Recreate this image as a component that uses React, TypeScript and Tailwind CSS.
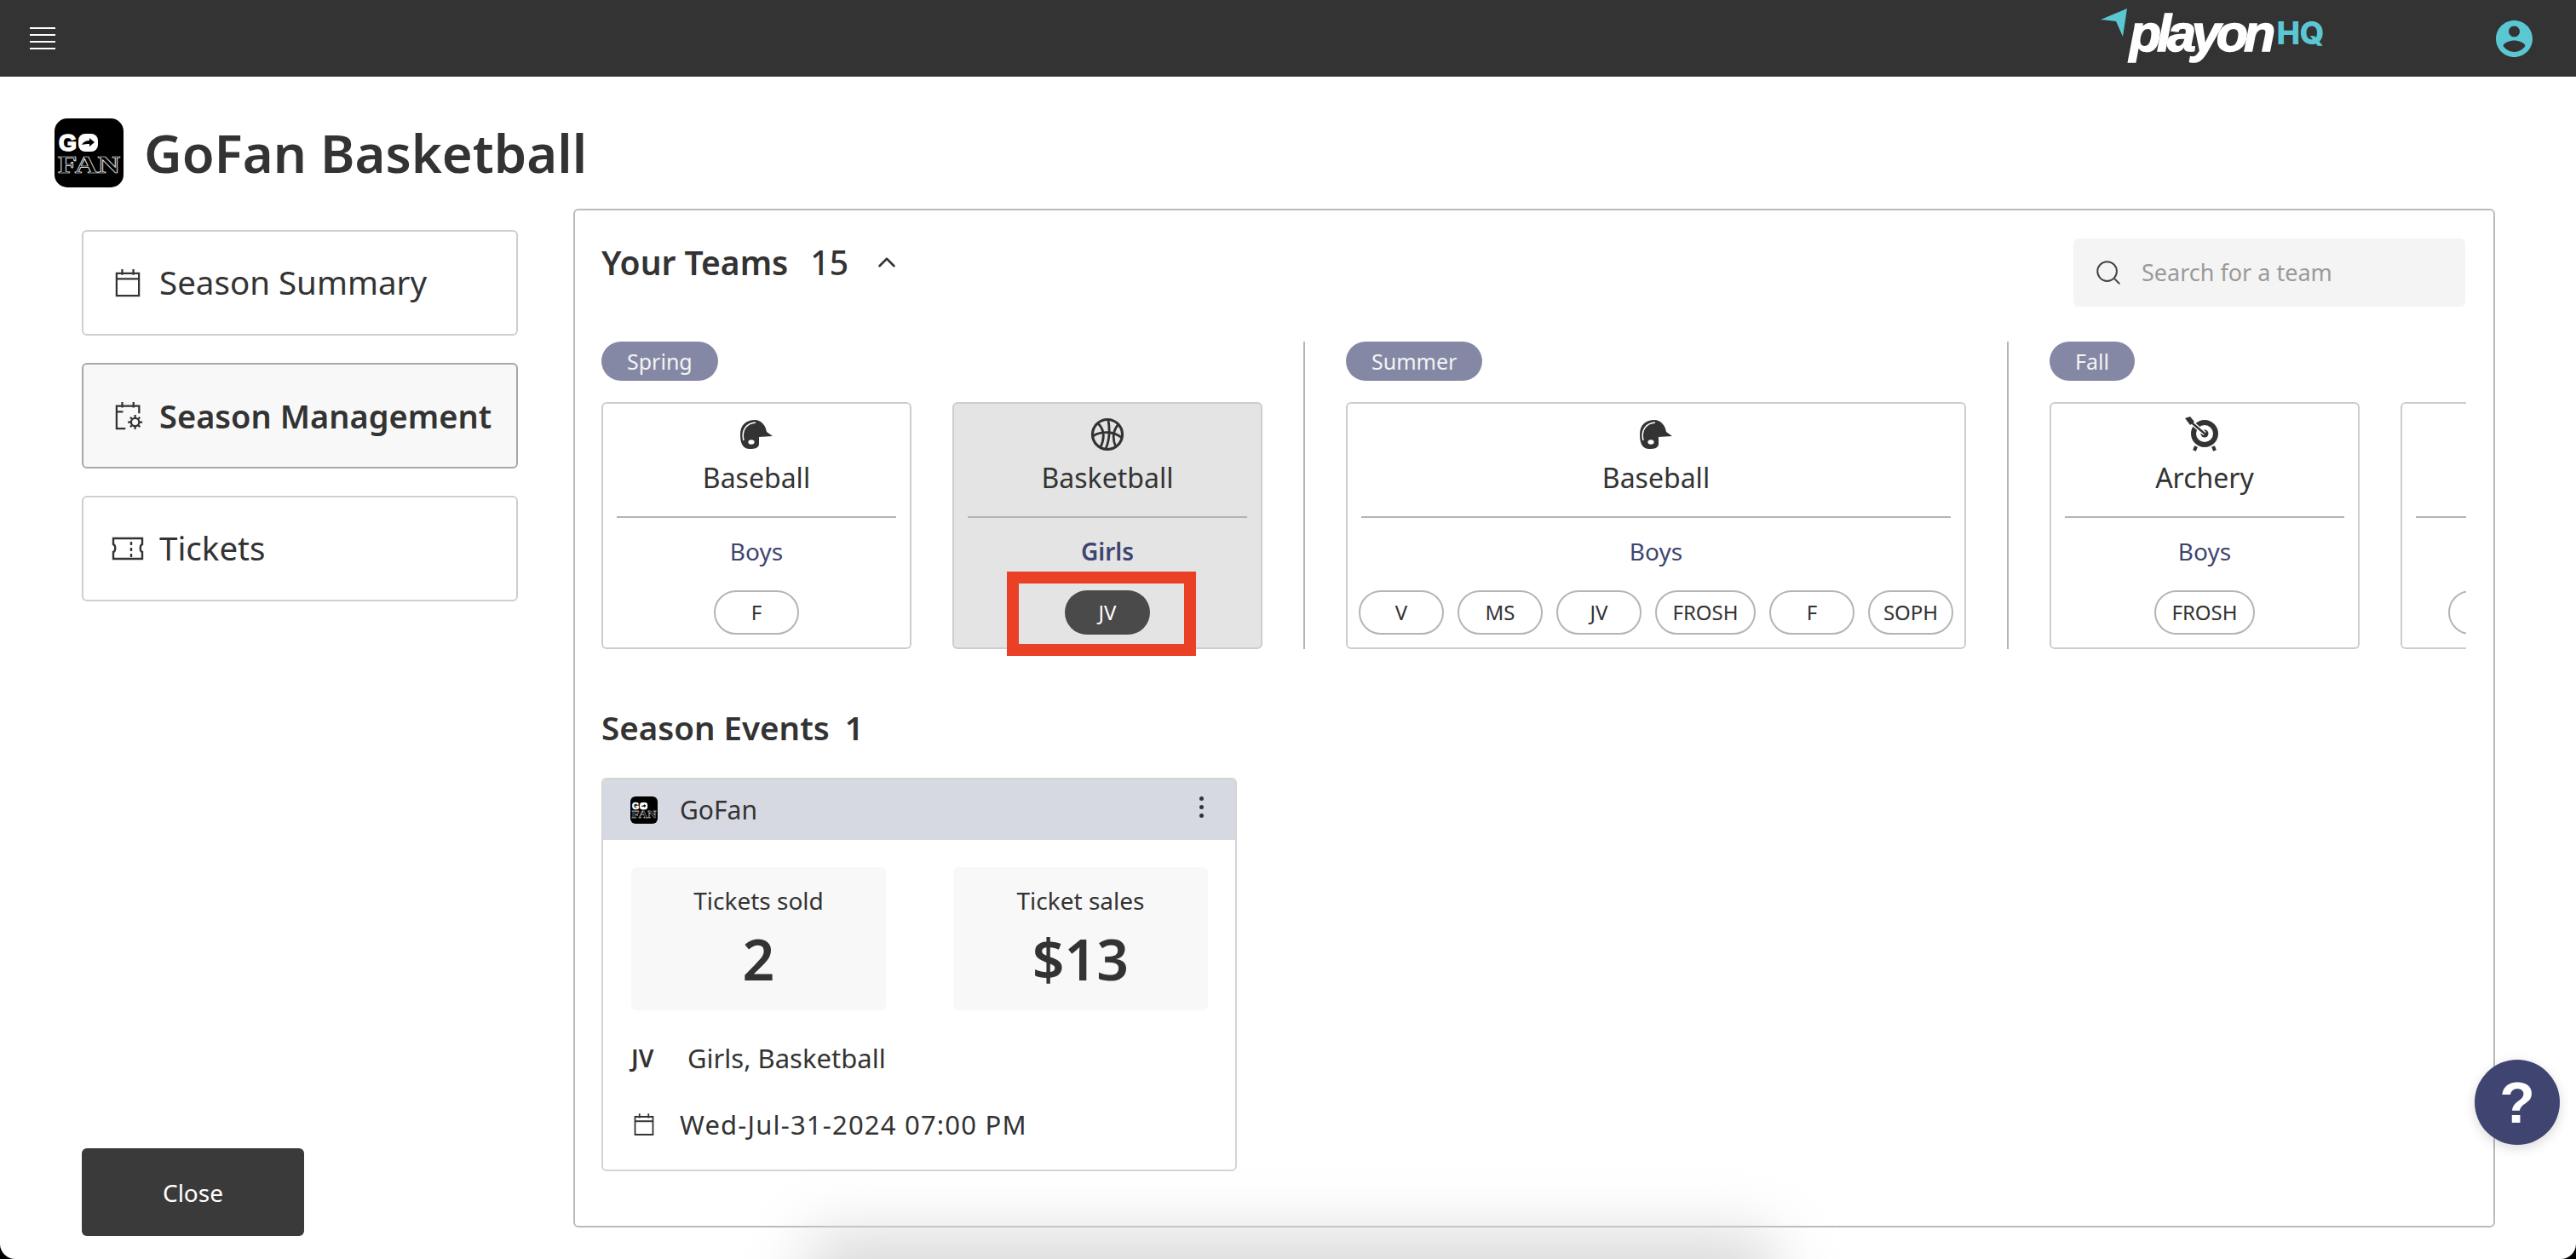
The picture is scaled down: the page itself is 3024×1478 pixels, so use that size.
import React from "react";
import { ChevronUp, Search } from "lucide-react";

type Team = {
  sport: string;
  icon: "helmet" | "ball" | "target";
  gender: string;
  chips: string[];
  wide?: boolean;
  active?: boolean;
};

const seasons: { name: string; teams: Team[] }[] = [
  {
    name: "Spring",
    teams: [
      { sport: "Baseball", icon: "helmet", gender: "Boys", chips: ["F"] },
      { sport: "Basketball", icon: "ball", gender: "Girls", chips: ["JV"], active: true },
    ],
  },
  {
    name: "Summer",
    teams: [
      { sport: "Baseball", icon: "helmet", gender: "Boys", chips: ["V", "MS", "JV", "FROSH", "F", "SOPH"], wide: true },
    ],
  },
  {
    name: "Fall",
    teams: [
      { sport: "Archery", icon: "target", gender: "Boys", chips: ["FROSH"] },
      // scrolled out of the panel, only its left edge shows
      { sport: "", icon: "target", gender: "", chips: ["", " "] },
    ],
  },
];

function HelmetIcon() {
  return (
    <svg viewBox="8 0 60 60" className="w-[60px] h-[60px]">
      <path d="M19 30C19 18 27 13 36 13C44 13 49 20 50 27L57 32L41 33L41 41C41 46 36 47 30 47C23 47 19 42 19 30Z" fill="#333" />
      <path d="M23 37C20 25 26 17 37 16" fill="none" stroke="#fff" strokeWidth="1.6" />
      <ellipse cx="32" cy="39" rx="3.6" ry="2.8" fill="#fff" />
    </svg>
  );
}

function BallIcon() {
  return (
    <svg viewBox="0 0 60 60" fill="none" stroke="#333" strokeWidth="2.8" className="w-[60px] h-[60px]">
      <circle cx="30" cy="30" r="17.5" strokeWidth="3.2" />
      <path d="M31 13C33 25 32 38 28 47M19 17C26 24 27 34 22 45M43 18C36 26 36 36 40 45M13 32C22 26 38 26 47 34" />
    </svg>
  );
}

function TargetIcon() {
  return (
    <svg viewBox="3 0 60 60" className="w-[60px] h-[60px]">
      <circle cx="33" cy="29" r="13" fill="none" stroke="#333" strokeWidth="6" />
      <circle cx="33" cy="29" r="4.5" fill="#333" />
      <path d="M14 13L33 29" stroke="#fff" strokeWidth="5" />
      <path d="M14 13L33 29" stroke="#333" strokeWidth="2.4" />
      <path d="M10 11L16 9L21 15L16 19Z" fill="#333" />
      <path d="M23 44L21 49M43 44L45 49" stroke="#333" strokeWidth="4" />
    </svg>
  );
}

function SportIcon({ kind }: { kind: Team["icon"] }) {
  if (kind === "helmet") return <HelmetIcon />;
  if (kind === "target") return <TargetIcon />;
  return <BallIcon />;
}

function GoFanLogo({ className }: { className: string }) {
  return (
    <svg viewBox="0 0 81 81" className={className}>
      <rect width="81" height="81" rx="15" fill="#000" />
      <text x="5" y="38" fontFamily="Liberation Sans" fontWeight="700" fontSize="27" stroke="#fff" strokeWidth="1.6" fill="#fff">G</text>
      <rect x="28" y="18" width="23" height="21" rx="8" fill="#fff" />
      <path d="M32 31C34 27 38 26 41 26V23L47 28L41 33V30C38 30 35 30 32 31Z" fill="#000" />
      <text x="4" y="64" fontFamily="Liberation Serif" fontWeight="700" fontSize="29" textLength="73" lengthAdjust="spacingAndGlyphs" fill="#000" stroke="#fff" strokeWidth="0.7">FAN</text>
    </svg>
  );
}

function PlayonLogo() {
  return (
    <div className="flex items-center mb-[12px]">
      <svg viewBox="0 0 32 34" className="w-[32px] h-[34px] mb-[24px]">
        <path d="M0 13L31 0L26 33L18 15Z" fill="#5bc7d3" />
      </svg>
      <span className="ml-[2px] pr-[4px] font-['Liberation_Sans',sans-serif] font-bold italic text-[61px] leading-[62px] tracking-[-5px] text-white [-webkit-text-stroke:1.5px_white]">playon</span>
      <span className="ml-[2px] font-['Inter',sans-serif] font-extrabold text-[37px] leading-[38px] tracking-[-0.5px] text-[#5bc7d3]">HQ</span>
    </div>
  );
}

function CalendarIcon({ className }: { className: string }) {
  return (
    <svg viewBox="0 0 32 36" fill="none" stroke="#333" strokeWidth="2.4" className={className}>
      <path d="M2 6H30V34H2ZM2 13H30M9 1V8M23 1V8" />
    </svg>
  );
}

function NavItem({ label, icon, active }: { label: string; icon: React.ReactNode; active?: boolean }) {
  return (
    <div className={active ? "flex items-center h-[124px] pl-[37px] rounded-[6px] border-2 border-[#a8a8a8] bg-[#f8f8f8]" : "flex items-center h-[124px] pl-[37px] rounded-[6px] border-2 border-[#cfcfcf]"}>
      <div className="w-[52px] flex justify-start">{icon}</div>
      <span className={active ? "text-[38px] font-semibold text-[#333]" : "text-[38.5px] text-[#333]"}>{label}</span>
    </div>
  );
}

function TeamCard({ team }: { team: Team }) {
  return (
    <div className={`flex flex-col items-center shrink-0 h-[290px] rounded-[6px] border-2 border-[#cdcdcd] ${team.wide ? "w-[728px]" : "w-[364px]"} ${team.active ? "bg-[#e4e4e4]" : "bg-white"}`}>
      <div className="flex items-center justify-center h-[60px] mt-[6px]">
        <SportIcon kind={team.icon} />
      </div>
      <div className="h-[44px] text-[32px] leading-[44px] text-[#333] mt-[-1px]">{team.sport}</div>
      <div className="self-stretch h-[2px] mx-[16px] mt-[23px] bg-[#b4b4b4]" />
      <div className={team.active ? "h-[44px] mt-[17px] text-[28px] leading-[44px] font-semibold text-[#3f4570]" : "h-[44px] mt-[17px] text-[28px] leading-[44px] text-[#3f4570]"}>{team.gender}</div>
      <div className="flex gap-[16px] mt-[24px]">
        {team.chips.map((chip, i) => (
          <div
            key={i}
            className={`flex items-center justify-center h-[52px] rounded-[26px] text-[24px] ${chip === "FROSH" || chip.trim() === "" ? "w-[118px]" : "w-[100px]"} ${team.active ? "bg-[#4a4a4a] text-white" : "border-2 border-[#b5b5b5] text-[#333]"}`}
          >
            {chip}
          </div>
        ))}
      </div>
    </div>
  );
}

function Stat({ label, value }: { label: string; value: string }) {
  return (
    <div className="flex flex-col items-center w-[299px] h-[168px] pt-[20px] rounded-[6px] bg-[#f8f8f8]">
      <div className="text-[28px] leading-[38px] text-[#333]">{label}</div>
      <div className="mt-[7px] text-[66px] leading-[84px] font-semibold text-[#333]">{value}</div>
    </div>
  );
}

export default function App() {
  return (
    <div className="relative w-[3024px] h-[1478px] overflow-hidden bg-black font-['Noto_Sans',sans-serif]">
      <div className="h-full rounded-b-[18px] bg-white overflow-hidden">
        {/* Top bar */}
        <header className="flex items-center justify-between h-[90px] pl-[35px] pr-[51px] bg-[#333]">
          <div className="flex flex-col gap-[6px] w-[30px]">
            <div className="h-[2px] bg-white" />
            <div className="h-[2px] bg-white" />
            <div className="h-[2px] bg-white" />
            <div className="h-[2px] bg-white" />
          </div>
          <div className="flex items-center gap-[202px]">
            <PlayonLogo />
            <svg viewBox="2 2 20 20" className="w-[43px] h-[43px]" fill="#5bc7d3">
              <path d="M12 2C6.48 2 2 6.48 2 12s4.48 10 10 10 10-4.48 10-10S17.52 2 12 2zm0 3c1.66 0 3 1.34 3 3s-1.34 3-3 3-3-1.34-3-3 1.34-3 3-3zm0 14.2c-2.5 0-4.71-1.28-6-3.22.03-1.99 4-3.08 6-3.08 1.99 0 5.97 1.09 6 3.08-1.29 1.94-3.5 3.22-6 3.22z" />
            </svg>
          </div>
        </header>

        {/* Page title */}
        <div className="flex items-center gap-[24px] pl-[64px] mt-[49px]">
          <GoFanLogo className="w-[81px] h-[81px]" />
          <h1 className="text-[61.5px] leading-[81px] font-semibold text-[#333]">GoFan Basketball</h1>
        </div>

        <div className="flex mt-[25px] pl-[96px]">
          {/* Side menu */}
          <aside className="flex flex-col w-[512px] mr-[65px] pt-[25px]">
            <div className="flex flex-col gap-[32px]">
              <NavItem label="Season Summary" icon={<CalendarIcon className="w-[30px] h-[34px]" />} />
              <NavItem
                active
                label="Season Management"
                icon={
                  <svg viewBox="0 0 36 36" fill="none" stroke="#333" strokeWidth="2.4" className="w-[34px] h-[34px]">
                    <path d="M13 34H2V6H30V15M2 13H10M9 1V8M23 1V8" />
                    <circle cx="25" cy="26" r="5" />
                    <path d="M25 17V21M25 31V35M16 26H20M30 26H34M19 20L21 22M29 30L31 32M31 20L29 22M21 30L19 32" />
                  </svg>
                }
              />
              <NavItem
                label="Tickets"
                icon={
                  <svg viewBox="0 0 38 28" fill="none" stroke="#333" strokeWidth="2.4" className="w-[38px] h-[28px] ml-[-4px]">
                    <path d="M2 2H36V9C33 10 33 17 36 18V26H2V18C5 17 5 10 2 9ZM23 6V10M23 13V17M23 20V24" />
                  </svg>
                }
              />
            </div>
            <button className="mt-[642px] w-[261px] h-[103px] rounded-[6px] bg-[#3a3a3a] text-[28px] text-white">Close</button>
          </aside>

          {/* Teams panel */}
          <main className="w-[2256px] h-[1196px] px-[31px] rounded-[6px] border-2 border-[#bbb]">
            <div className="flex items-start justify-between pt-[33px] pr-[2px]">
              <div className="flex items-center h-[60px] mt-[-2px] text-[39px] font-semibold text-[#333]">
                <span>Your Teams</span>
                <span className="ml-[26px] font-medium">15</span>
                <ChevronUp className="w-[34px] h-[34px] ml-[28px]" strokeWidth={1.8} />
              </div>
              <div className="flex items-center w-[460px] h-[80px] pl-[24px] rounded-[6px] bg-[#f4f4f4]">
                <Search className="w-[34px] h-[34px] text-[#444]" strokeWidth={1.4} />
                <span className="ml-[22px] text-[27px] text-[#9a9a9a]">Search for a team</span>
              </div>
            </div>

            <div className="flex mt-[41px] w-[2189px] overflow-hidden">
              {seasons.map((season, i) => (
                <div key={season.name} className="flex shrink-0">
                  {i > 0 && <div className="shrink-0 w-[2px] h-[361px] mx-[48px] bg-[#b4b4b4]" />}
                  <div>
                    <div className="w-fit h-[46px] px-[30px] rounded-[23px] bg-[#8488a5] text-[25px] leading-[46px] text-[#f4f4f4]">{season.name}</div>
                    <div className="flex gap-[48px] mt-[25px]">
                      {season.teams.map((team, j) => (
                        <TeamCard key={j} team={team} />
                      ))}
                    </div>
                  </div>
                </div>
              ))}
            </div>

            <div className="mt-[62px] text-[38.5px] leading-[60px] font-semibold text-[#333]">
              Season Events<span className="ml-[18px]">1</span>
            </div>

            {/* Event card */}
            <div className="mt-[29px] w-[746px] h-[462px] rounded-[6px] border-2 border-[#d4d4d4] overflow-hidden">
              <div className="flex items-center justify-between h-[71px] pl-[32px] pr-[37px] bg-[#d6d9e2]">
                <div className="flex items-center gap-[26px]">
                  <GoFanLogo className="w-[32px] h-[32px]" />
                  <span className="text-[30px] text-[#333]">GoFan</span>
                </div>
                <div className="flex flex-col gap-[5px] mb-[6px]">
                  <div className="w-[5px] h-[5px] rounded-full bg-[#333]" />
                  <div className="w-[5px] h-[5px] rounded-full bg-[#333]" />
                  <div className="w-[5px] h-[5px] rounded-full bg-[#333]" />
                </div>
              </div>
              <div className="flex justify-between pl-[33px] pr-[32px] pt-[32px]">
                <Stat label="Tickets sold" value="2" />
                <Stat label="Ticket sales" value="$13" />
              </div>
              <div className="flex items-center h-[44px] mt-[34px] pl-[33px] text-[31px] text-[#333]">
                <span className="w-[66px] text-[28px] font-semibold">JV</span>
                <span>Girls, Basketball</span>
              </div>
              <div className="flex items-center h-[44px] mt-[34px] pl-[36px] text-[31px] tracking-[1.2px] text-[#333]">
                <CalendarIcon className="w-[24px] h-[28px] mr-[30px]" />
                <span>Wed-Jul-31-2024 07:00 PM</span>
              </div>
            </div>
          </main>
        </div>
      </div>

      {/* Annotation drawn over the active chip */}
      <div className="absolute left-[1182px] top-[671px] w-[222px] h-[99px] border-[14px] border-[#ea4025]" />

      {/* Help button */}
      <div className="absolute left-[2905px] top-[1244px] flex items-center justify-center w-[100px] h-[100px] rounded-full bg-[#3f4570] shadow-[0_4px_14px_rgba(0,0,0,0.15)] font-['Liberation_Sans',sans-serif] font-bold text-[68px] text-white">?</div>

      {/* Shadow rising from below the window */}
      <div className="absolute left-[950px] top-[1450px] w-[1130px] h-[90px] bg-[#d8d8d8] blur-[36px] pointer-events-none" />
    </div>
  );
}
